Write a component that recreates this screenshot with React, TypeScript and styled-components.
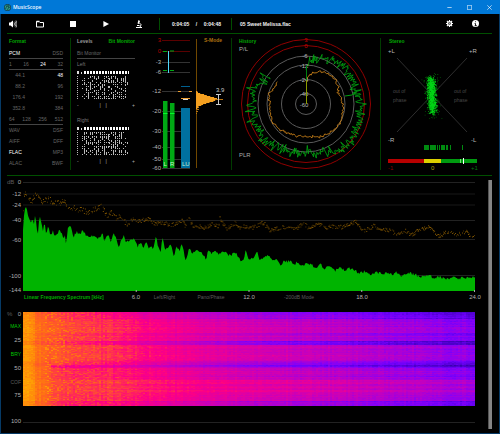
import React from "react";
import styled, { createGlobalStyle, css } from "styled-components";

/* ---------- helpers ---------- */

const makeRandom = (seed: number) => {
  let s = seed;
  return () => {
    s = (s * 1664525 + 1013904223) % 4294967296;
    return s / 4294967296;
  };
};

type Point = [number, number];

const interpolate = (points: Point[], x: number) => {
  for (let i = 1; i < points.length; i++) {
    if (x <= points[i][0]) {
      const [x0, y0] = points[i - 1];
      const [x1, y1] = points[i];
      return y0 + ((x - x0) / (x1 - x0)) * (y1 - y0);
    }
  }
  return points[points.length - 1][1];
};

/* ---------- styles ---------- */

const FONT = '"Liberation Sans", Arial, sans-serif';

const GlobalStyle = createGlobalStyle`
  * { box-sizing: border-box; }
  html, body { margin: 0; background: #000; }
  body { font-family: ${FONT}; font-size: 5px; line-height: 8px; color: #777; }
  button { font: inherit; color: inherit; background: none; border: 0; padding: 0; margin: 0; cursor: pointer; }
  svg { display: block; }
`;

const Window = styled.div`
  display: flex;
  flex-direction: column;
  min-height: 100vh;
  background: #000;
  border: 1px solid #063a66;
  border-top: 0;
`;

const TitleBar = styled.header`
  display: flex;
  align-items: center;
  height: 14px;
  margin: 0 -1px;
  padding: 0 5px 0 4px;
  gap: 2px;
  background: #0078d7;
`;

const AppName = styled.h1`
  flex: 1;
  margin: 0;
  font-family: "Open Sans", sans-serif;
  font-size: 5px;
  line-height: 8px;
  font-weight: 600;
  color: #f0f8ff;
`;

const WindowButtons = styled.div`
  display: flex;
  gap: 8px;
`;

const IconButton = styled.button`
  display: grid;
  place-items: center;
  width: 12px;
  height: 12px;
  color: #fff;
`;

const Toolbar = styled.nav`
  display: flex;
  align-items: center;
  height: 19px;
  margin-left: 6px;
  padding-right: 18px;
  color: #f4f4f4;
  font-weight: 700;
`;

const Transport = styled.div`
  display: grid;
  grid-template-columns: 27px 33px 33px 33px 26px;
`;

const ToolDivider = styled.span`
  width: 1px;
  height: 12px;
  background: #004d00;
`;

const Clock = styled.div`
  display: flex;
  justify-content: space-between;
  width: 71px;
  padding: 0 10px 0 12px;
`;

const TrackName = styled.div`
  flex: 1;
  padding-left: 8px;
`;

const ToolbarEnd = styled.div`
  display: flex;
  gap: 14px;
`;

const Panels = styled.section`
  display: grid;
  grid-template-columns: 64fr 74fr 87fr 149fr 103fr;
  margin: 0 7px 0 6px;
  padding-right: 8px;
  border-top: 1px solid #005000;
  border-bottom: 1px solid #005000;
  min-height: 143px;
`;

const Panel = styled.section<{ $divided?: boolean }>`
  position: relative;
  min-width: 0;
  ${(p) =>
    p.$divided &&
    css`
      background: linear-gradient(#003c00, #003c00) right 4px / 1px 132px no-repeat;
    `}
`;

const FormatPanel = styled(Panel)`
  padding: 0 8px 0 2px;
`;

const LevelsPanel = styled(Panel)`
  padding: 0 10px 0 6px;
`;

const PanelHead = styled.header`
  display: flex;
  justify-content: space-between;
  align-items: center;
  height: 14px;
  font-weight: 700;
  color: #888;
`;

const PanelTitle = styled.h2`
  margin: 0;
  font: inherit;
  color: #00a800;
`;

const TabButton = styled.button<{ $active?: boolean }>`
  color: ${(p) => (p.$active ? "#00a800" : "#999")};
`;

const Row = styled.div<{ $ruled?: boolean; $indent?: boolean }>`
  display: flex;
  justify-content: space-between;
  align-items: center;
  height: 11px;
  color: #666;
  border-bottom: 1px solid ${(p) => (p.$ruled ? "#444" : "transparent")};
  > :first-child {
    min-width: ${(p) => (p.$indent ? "16px" : "0")};
    text-align: ${(p) => (p.$indent ? "right" : "left")};
  }
`;

const Value = styled.span<{ $on?: boolean }>`
  color: ${(p) => (p.$on ? "#fff" : "inherit")};
`;

const ChannelName = styled.div`
  height: 11px;
  line-height: 11px;
  color: #777;
`;

const BitMap = styled.svg`
  width: 90%;
  height: 28px;
  margin-top: 1px;
`;

const BitScale = styled.div<{ $last?: boolean }>`
  display: grid;
  grid-template-columns: 22fr 6fr 26fr 3fr;
  align-items: center;
  height: 11px;
  margin-bottom: ${(p) => (p.$last ? "0" : "5px")};
  color: #aaa;
`;

const Drawing = styled.svg`
  width: 100%;
  height: auto;
  font-family: ${FONT};
  font-size: 6px;
`;

const Analysis = styled.main`
  flex: 1;
  display: flex;
  gap: 13px;
  padding: 0 7px 4px 6px;
`;

const Graphs = styled.div`
  flex: 1;
  min-width: 0;
  padding-top: 2px;
`;

const Graph = styled.section`
  display: flex;
  margin-bottom: 8px;
  &:last-child { margin-bottom: 0; }
`;

const Axis = styled.div`
  width: 16px;
  padding-right: 2px;
  font-size: 6px;
  color: #b0b0b0;
  white-space: nowrap;
`;

const Tick = styled.div<{ $gap: number }>`
  display: flex;
  justify-content: flex-end;
  height: ${(p) => p.$gap}px;
`;

const Unit = styled.span`
  flex: 1;
  color: #5c5c5c;
`;

const ModeButton = styled.button<{ $on?: boolean }>`
  height: 8px;
  font-size: 5px;
  color: ${(p) => (p.$on ? "#00c800" : "#5c5c5c")};
`;

const PlotColumn = styled.div`
  flex: 1;
  min-width: 0;
`;

const Plot = styled.svg<{ $height: number; $top?: number }>`
  width: 100%;
  height: ${(p) => p.$height}px;
  margin-top: ${(p) => p.$top ?? 0}px;
`;

const FrequencyRow = styled.div`
  display: grid;
  grid-template-columns: 103fr 20fr 37fr 56fr 20fr 80fr 13fr 20fr 93fr 20fr;
  height: 10px;
  margin-right: -10px;
  justify-items: center;
  align-items: center;
  white-space: nowrap;
  color: #5c5c5c;
`;

const GraphTitle = styled.h2`
  justify-self: start;
  margin: 0;
  padding-left: 1px;
  font: inherit;
  font-weight: 700;
  color: #00a800;
`;

const Frequency = styled.span`
  font-size: 6px;
  color: #b0b0b0;
`;

const ScrollBar = styled.div`
  width: 4px;
  margin-top: 4px;
  background: #858585;
  border-left: 1px solid #555;
`;

/* ---------- format and levels ---------- */

const rates = [
  ["44.1", "48"],
  ["88.2", "96"],
  ["176.4", "192"],
  ["352.8", "384"],
];
const files = [
  ["WAV", "DSF"],
  ["AIFF", "DFF"],
  ["FLAC", "MP3"],
  ["ALAC", "BWF"],
];
const active = new Set(["PCM", "24", "48", "FLAC"]);

const Values = ({ items, ruled, indent }: { items: string[]; ruled?: boolean; indent?: boolean }) => (
  <Row $ruled={ruled} $indent={indent}>
    {items.map((item) => (
      <Value key={item} $on={active.has(item)}>
        {item}
      </Value>
    ))}
  </Row>
);

const bitPath = (seed: number) => {
  const rnd = makeRandom(seed);
  let d = "";
  for (let y = 5; y < 28; y += 2) {
    d += `M0 ${y}h1v1h-1z`;
    if (rnd() > 0.6) d += `M5 ${y}h1v1h-1z`;
    for (let x = 7; x < 52; x += 2) {
      const density = x === 21 || x === 27 || x === 39 ? 0.9 : 0.55;
      if (rnd() < density) d += `M${x} ${y}h1v${rnd() > 0.5 ? 2 : 1}h-1z`;
    }
  }
  return d;
};

const Bits = ({ seed }: { seed: number }) => (
  <BitMap viewBox="0 0 53 28" preserveAspectRatio="none" shapeRendering="crispEdges">
    <path d="M0 0h2v3h-2zM4 1h1v2h-1z" fill="#ddd" />
    <path d="M7 1.5H53" stroke="#fff" strokeWidth="3" strokeDasharray="2 1" />
    <path d={bitPath(seed)} fill="#bbb" />
  </BitMap>
);

/* ---------- loudness meter ---------- */

const meterTicks: [string, number][] = [
  ["3", 6], ["0", 17], ["-3", 28], ["-6", 38], ["-12", 57],
  ["-20", 77], ["-30", 97], ["-40", 113], ["-50", 125], ["-60", 134],
];

const Meter = () => {
  const rnd = makeRandom(8);
  let lobe = "M51 57";
  for (let y = 57; y <= 74; y++) {
    const w = 20 * Math.exp(-Math.pow((y - 65) / 4.6, 2)) + rnd() * 2;
    lobe += `H${(51 + w).toFixed(1)}v1`;
  }
  lobe += "H51z";
  return (
    <Drawing viewBox="0 0 87 140" role="img" aria-label="Level and loudness meter">
      {meterTicks.map(([label, y]) => (
        <g key={label}>
          <line x1="17" x2="45" y1={y + 0.5} y2={y + 0.5} stroke={y < 20 ? "#5a0000" : "#333"} />
          <text x="16" y={y + 2} textAnchor="end" fill={y < 20 ? "#b80000" : "#b8b8b8"}>
            {label}
          </text>
        </g>
      ))}
      <rect x="18" y="67" width="4.500" height="67" fill="#00a814" />
      <rect x="25" y="69" width="4.500" height="65" fill="#00a814" />
      <rect x="18" y="79" width="4.500" height="1" fill="#00ff2a" />
      <rect x="25" y="79" width="4.500" height="1" fill="#00ff2a" />
      <rect x="36" y="74" width="9" height="60" fill="#0070a0" />
      <rect x="36" y="52" width="9" height="1" fill="#006090" />
      <path d="M33 57.500h3M44 57.500h3M36 64.500h9" stroke="#f0a030" />
      <path d="M38 65.500h5" stroke="#ddd" />
      <path d="M18 17.500h4M25 17h4M18 36.500h4M25 36.500h4" stroke="#00a814" />
      <path d="M23.500 17V39" stroke="#50d8f8" />
      <path d="M51.500 5V134" stroke="#704800" />
      <path d={lobe} fill="#f5a020" />
      <path d="M51 75.500h3M51 77.500h2M51 79.500h1M70 65.500h8" stroke="#b87410" />
      <path d="M73.500 60V71M71 60.500h5M71 70.500h5" stroke="#ccc" fill="none" />
      <text x="71" y="58" fill="#ccc">3.9</text>
      <text x="59" y="8" fill="#b07010" fontWeight="700" fontSize="5">S-Mode</text>
      <g fill="#c8f0d0" fontSize="6">
        <text x="18.500" y="132">L</text>
        <text x="25" y="132">R</text>
        <text x="37" y="132">LU</text>
      </g>
    </Drawing>
  );
};

/* ---------- history ---------- */

const peakRadius: Point[] = [
  [0, 39], [8, 43], [20, 49], [32, 50], [45, 53], [60, 54], [75, 51], [90, 54], [110, 57],
  [135, 58], [150, 54], [165, 50], [180, 48], [200, 50], [225, 54], [250, 56], [270, 54], [285, 56], [297, 49], [306, 50],
];
const loudRadius: Point[] = [
  [2, 26], [8, 30], [25, 36], [45, 38], [58, 37], [70, 34], [90, 37], [120, 39], [150, 37],
  [170, 33], [190, 33], [210, 34], [240, 38], [270, 36], [285, 38], [305, 35], [308, 37],
];

const polarPath = (radius: Point[], step: number, jitter: number, seed: number) => {
  const rnd = makeRandom(seed);
  const last = radius[radius.length - 1][0];
  const parts: string[] = [];
  for (let a = radius[0][0]; a <= last; a += step) {
    const r = interpolate(radius, a) + (rnd() + rnd() - 1) * jitter;
    const t = (a * Math.PI) / 180;
    parts.push(`${(74 + r * Math.sin(t)).toFixed(1)} ${(70 - r * Math.cos(t)).toFixed(1)}`);
  }
  return "M" + parts.join("L");
};

const History = () => (
  <Drawing viewBox="0 0 149 140" role="img" aria-label="History">
    <g fill="none">
      <g stroke="#900000">
        <circle cx="74" cy="70" r="64.500" />
        <circle cx="74" cy="70" r="58.500" />
      </g>
      <g stroke="#5a5a5a">
        <circle cx="74" cy="70" r="48" />
        <circle cx="74" cy="70" r="39" />
        <circle cx="74" cy="70" r="24.500" />
        <circle cx="74" cy="70" r="10.500" />
      </g>
      <path d={polarPath(peakRadius, 0.9, 7, 31)} stroke="#00a810" strokeWidth="0.800" />
      <path d="M113 62l7-1" stroke="#00a010" />
      <path d={polarPath(loudRadius, 2, 1.8, 9)} stroke="#c88018" strokeWidth="0.900" />
    </g>
    <g fill="#b8b8b8" textAnchor="middle">
      <text x="74" y="8" fill="#c00000">3</text>
      <text x="74" y="14" fill="#c00000">0</text>
      <text x="73" y="24">-6</text>
      <text x="72" y="34">-12</text>
      <text x="72" y="48">-24</text>
      <text x="72" y="62">-40</text>
      <text x="72" y="73">-60</text>
    </g>
    <path d="M74.500 32V46" stroke="#008010" />
    <path d="M74.500 46V70" stroke="#8a9a00" />
    <text x="7" y="9" fill="#00a800" fontWeight="700" fontSize="5">History</text>
    <text x="7" y="17" fill="#aaa">P/L</text>
    <text x="7" y="123" fill="#aaa">PLR</text>
  </Drawing>
);

/* ---------- stereo ---------- */

const cloudPath = (seed: number, count: number, spread: number, reach: number, tail: number) => {
  const rnd = makeRandom(seed);
  let d = "";
  for (let i = 0; i < count; i++) {
    const y = (rnd() - 0.5) * 2 * reach + (rnd() - 0.5) * tail;
    const x = (rnd() + rnd() + rnd() - 1.5) * spread + y * 0.05;
    d += `M${(50.5 + x).toFixed(1)} ${(61 + y).toFixed(1)}h.8v.8h-.8z`;
  }
  return d;
};

const barcode = () => {
  const rnd = makeRandom(77);
  let d = "";
  for (let x = 36; x < 82; x++) {
    const dense = x > 42 && x < 68;
    if (rnd() < (dense ? 0.75 : 0.15)) d += `M${x}.5 111v5`;
  }
  return d;
};

const Stereo = () => (
  <Drawing viewBox="0 0 103 140" role="img" aria-label="Stereo">
    <path d="M16 24L86 98M86 24L16 98" stroke="#3a3a3a" strokeWidth="0.800" />
    <text x="8" y="9" fill="#00a800" fontWeight="700" fontSize="5">Stereo</text>
    <g fill="#b8b8b8">
      <text x="7" y="19">+L</text>
      <text x="88" y="19">+R</text>
      <text x="7" y="108">-R</text>
      <text x="90" y="108">-L</text>
    </g>
    <g fill="#484848" fontSize="5">
      <text x="12" y="59">out of</text>
      <text x="12" y="68">phase</text>
      <text x="73" y="59">out of</text>
      <text x="73" y="68">phase</text>
    </g>
    <path d={cloudPath(5, 380, 7, 18, 12)} fill="#006a08" />
    <path d={cloudPath(12, 900, 3.8, 16, 8)} fill="#00d414" />
    <path d={barcode()} stroke="#009a12" strokeWidth="0.900" />
    <rect x="7" y="125" width="36" height="4" fill="#b80000" />
    <rect x="43" y="125" width="17" height="4" fill="#dcd000" />
    <rect x="60" y="125" width="36" height="4" fill="#009a10" />
    <path d="M79.500 125v4" stroke="#70e870" />
    <path d="M82.500 124v6" stroke="#fff" />
    <text x="7" y="136" fill="#900000">-1</text>
    <text x="50" y="136" fill="#b0a800">0</text>
    <text x="90" y="136" fill="#007a10">+1</text>
  </Drawing>
);

/* ---------- spectrum ---------- */

const dbTicks: [string, number][] = [
  ["0", 12], ["-12", 11], ["-24", 15], ["-40", 20], ["-60", 36], ["-100", 14], ["-144", 8],
];

/* Points are in thirds of a pixel, measured from the left end of the axis. */
const level: Point[] = [
  [68, 170], [72, 110], [76, 92], [84, 125], [92, 150], [96, 130], [100, 155], [105, 118], [112, 185], [118, 125],
  [128, 170], [133, 145], [138, 185], [144, 152], [150, 180], [158, 172], [163, 188], [172, 182], [178, 165], [190, 195],
  [193, 178], [197, 208], [203, 165], [209, 155], [214, 165], [220, 190], [230, 172], [238, 183], [245, 170], [255, 180],
  [265, 190], [280, 185], [292, 195], [307, 178], [312, 200], [325, 182], [332, 200], [342, 180], [356, 215], [372, 183],
  [378, 205], [392, 195], [405, 198], [413, 218], [420, 205], [430, 222], [438, 200], [445, 225], [460, 220], [467, 185],
  [474, 215], [482, 230], [488, 190], [495, 230], [513, 212], [522, 248], [530, 215], [538, 230], [546, 212], [558, 260],
  [568, 218], [575, 240], [585, 228], [605, 232], [618, 258], [625, 225], [635, 238], [645, 230], [655, 240], [672, 232],
  [690, 245], [708, 235], [722, 260], [733, 255], [738, 225], [745, 255], [762, 250], [772, 228], [778, 262], [795, 250],
  [807, 245], [818, 262], [830, 252], [842, 270], [855, 262], [872, 262], [885, 272], [892, 262], [905, 278], [920, 268],
  [935, 272], [950, 282], [962, 270], [975, 285], [988, 275], [1005, 290], [1020, 283], [1035, 288], [1050, 282],
  [1080, 298], [1095, 292], [1110, 302], [1130, 296], [1180, 300], [1190, 295], [1205, 305], [1230, 297], [1265, 308],
  [1285, 305], [1305, 312], [1320, 308], [1340, 315], [1362, 308], [1380, 315], [1395, 308], [1410, 315], [1427, 308],
];
const peaks: Point[] = [
  [68, 100], [72, 55], [80, 60], [92, 82], [105, 62], [125, 82], [145, 75], [165, 88], [190, 80], [205, 98], [225, 102],
  [260, 112], [285, 105], [303, 95], [318, 122], [335, 115], [345, 132], [360, 128], [378, 148], [400, 135], [420, 140],
  [440, 132], [465, 148], [490, 145], [510, 152], [540, 145], [545, 130], [555, 155], [563, 128], [580, 155], [615, 160],
  [635, 148], [655, 158], [658, 130], [680, 165], [705, 145], [720, 162], [735, 155], [750, 162], [790, 145], [810, 168],
  [840, 160], [870, 155], [885, 165], [910, 145], [925, 160], [960, 150], [980, 160], [1000, 155], [1025, 158],
  [1068, 142], [1090, 172], [1120, 155], [1150, 165], [1170, 168], [1195, 182], [1215, 168], [1235, 182], [1255, 168],
  [1290, 158], [1315, 185], [1340, 175], [1375, 180], [1400, 170], [1415, 190], [1427, 178],
];

const spectrumPath = () => {
  const rnd = makeRandom(3);
  let d = "M0 113";
  for (let x = 0; x < 453; x++) {
    const y = interpolate(level, 68 + x * 3) / 3 - 4 + (rnd() - 0.5) * 3;
    d += `L${x} ${y.toFixed(1)}`;
  }
  return d + "L453 99V113z";
};

const peakPath = (seed: number) => {
  const rnd = makeRandom(seed);
  let d = "";
  for (let x = 0; x < 453; x++) {
    if (rnd() < 0.25) continue;
    const spread = x < 110 ? 6 : 4;
    const y = interpolate(peaks, 68 + x * 3) / 3 - 4 + (rnd() - 0.5) * spread;
    d += `M${x} ${y.toFixed(1)}h1v1h-1z`;
  }
  return d;
};

const Spectrum = () => (
  <Plot $height={114} viewBox="0 0 453 114" preserveAspectRatio="none" role="img" aria-label="Frequency spectrum">
    <path d="M0 4.500H453M0 42.500H453M0 61.500H453M0 97.500H453" stroke="#222" />
    <path d="M0 16H453M0 27H453" stroke="#181818" />
    <path d={peakPath(17)} fill="#805500" />
    <path d={peakPath(41)} fill="#4c3300" />
    <path d={spectrumPath()} fill="#00b400" />
    <path d="M113.500 112v2M226.500 112v2M339.500 112v2M452.500 112v2" stroke="#aaa" />
  </Plot>
);

/* ---------- spectrogram ---------- */

const heatStops: [number, number, number, number][] = [
  [0, 24, 0, 90], [0.15, 60, 0, 180], [0.3, 110, 0, 250], [0.36, 135, 0, 245], [0.46, 180, 0, 205],
  [0.58, 222, 0, 165], [0.68, 255, 0, 130], [0.78, 255, 62, 66], [0.88, 255, 110, 20], [1, 255, 172, 0],
];

const heatColor = (v: number) => {
  let i = 1;
  while (i < heatStops.length - 1 && v > heatStops[i][0]) i++;
  const a = heatStops[i - 1];
  const b = heatStops[i];
  const t = (v - a[0]) / (b[0] - a[0]);
  return `rgb(${[1, 2, 3].map((k) => Math.round(a[k] + (b[k] - a[k]) * t)).join(",")})`;
};

const energy: Point[] = [
  [0, 0.97], [8, 0.95], [14, 0.88], [40, 0.8], [90, 0.74], [120, 0.68], [160, 0.62], [230, 0.54],
  [300, 0.49], [380, 0.42], [453, 0.36],
];

/* Each band is [first row below it, level offset]. */
const bands: [number, number][] = [
  [7, -0.12], [21, 0], [24, -0.07], [27, 0], [29, -0.04], [33, -0.16], [49, 0.02], [55, -0.09], [62, 0],
  [68, -0.02], [81, 0.07], [89, 0.02], [94, -0.08],
];

const spectrogramPaths = () => {
  const levels = 36;
  const paths: string[] = Array(levels + 1).fill("");
  const rnd = makeRandom(99);
  const columns = Array.from({ length: 227 }, () => (rnd() - 0.5) * 0.04);
  for (let y = 0; y < 94; y++) {
    const band = bands.find(([end]) => y < end)![1] + (rnd() - 0.5) * 0.08;
    let start = 0;
    let current = -1;
    for (let c = 0; c < 227; c++) {
      const x = c * 2;
      const far = Math.min(1, 0.2 + x / 300);
      let v = interpolate(energy, x) + band * far + columns[c] + (rnd() - 0.5) * 0.04;
      if (y > 53 && x > 26 && x < 120) v -= 0.06 * (1 - (x - 26) / 94);
      if (y > 52 && y < 56 && x > 26) v -= 0.08;
      if (x > 20 && x < 150 && rnd() < 0.22) v += 0.1 * (1 - x / 160);
      const q = Math.round(Math.max(0, Math.min(1, v)) * levels);
      if (q !== current) {
        if (current >= 0) paths[current] += `M${start} ${y}H${x}v1H${start}z`;
        start = x;
        current = q;
      }
    }
    paths[current] += `M${start} ${y}H453v1H${start}z`;
  }
  return paths.map((d, i) => ({ d, fill: heatColor(i / levels) }));
};

const Spectrogram = () => (
  <Plot
    $height={111}
    $top={2}
    viewBox="0 0 453 111"
    preserveAspectRatio="none"
    shapeRendering="crispEdges"
    role="img"
    aria-label="Spectrogram"
  >
    {spectrogramPaths().map(({ d, fill }) => (d ? <path key={fill} d={d} fill={fill} /> : null))}
    <path d="M0 110.500H453" stroke="#222" />
  </Plot>
);

/* ---------- icons ---------- */

const Icon = ({ size, children }: { size: number; children: React.ReactNode }) => (
  <svg width={size} height={size} viewBox="0 0 16 16" fill="none" stroke="currentColor" strokeWidth="2" aria-hidden="true">
    {children}
  </svg>
);

const AppLogo = () => (
  <svg width="7" height="7" viewBox="0 0 14 14" aria-hidden="true">
    <circle cx="7" cy="7" r="7" fill="#123f4d" />
    <circle cx="7" cy="7" r="5.500" fill="#2fa08a" />
    <path d="M3 10L6 3l3 4-2 5M8 2l3 6" stroke="#0b3440" strokeWidth="1.500" fill="none" />
  </svg>
);

/* ---------- page ---------- */

export default function App() {
  return (
    <>
      <GlobalStyle />
      <Window>
        <TitleBar>
          <AppLogo />
          <AppName>MusicScope</AppName>
          <WindowButtons>
            <IconButton aria-label="Minimize">
              <Icon size={5}><path d="M1 8H15" /></Icon>
            </IconButton>
            <IconButton aria-label="Maximize">
              <Icon size={5}><path d="M1 1H15V15H1z" /></Icon>
            </IconButton>
            <IconButton aria-label="Close">
              <Icon size={5}><path d="M1 1L15 15M15 1L1 15" /></Icon>
            </IconButton>
          </WindowButtons>
        </TitleBar>

        <Toolbar>
          <Transport>
            <IconButton aria-label="Volume">
              <Icon size={8}>
                <path d="M0 5H3L8 1V15L3 11H0z" fill="currentColor" stroke="none" />
                <path d="M10 5q2 3 0 6M12 3q4 5 0 10M14 1q5 7 0 14" strokeWidth="1.300" />
              </Icon>
            </IconButton>
            <IconButton aria-label="Open folder">
              <Icon size={8}><path d="M1 14V3H6L8 5H15V14z" /><path d="M1 3H7" strokeWidth="3" /></Icon>
            </IconButton>
            <IconButton aria-label="Stop">
              <Icon size={6}><path d="M0 0H16V16H0z" fill="currentColor" stroke="none" /></Icon>
            </IconButton>
            <IconButton aria-label="Play">
              <Icon size={6}><path d="M1 0L16 8L1 16z" fill="currentColor" stroke="none" /></Icon>
            </IconButton>
            <IconButton aria-label="Analyze">
              <Icon size={8}>
                <path d="M2 15H14M4 11H9" />
                <path d="M9 6q6 3 1 8" />
                <path d="M7 0L10 2L8 8L5 7z" fill="currentColor" stroke="none" />
              </Icon>
            </IconButton>
          </Transport>
          <ToolDivider />
          <Clock>
            <span>0:04:05</span>
            <span>/</span>
            <span>0:04:48</span>
          </Clock>
          <ToolDivider />
          <TrackName>05 Sweet Melissa.flac</TrackName>
          <ToolbarEnd>
            <IconButton aria-label="Settings">
              <Icon size={7}>
                <circle cx="8" cy="8" r="4.500" strokeWidth="3" />
                <path d="M8 0V4M8 12V16M0 8H4M12 8H16M2 2L5 5M11 11L14 14M14 2L11 5M5 11L2 14" strokeWidth="2.500" />
                <circle cx="8" cy="8" r="1" />
              </Icon>
            </IconButton>
            <IconButton aria-label="Information">
              <Icon size={7}>
                <circle cx="8" cy="8" r="8" fill="currentColor" stroke="none" />
                <path d="M8 3V5M6 8H8V13M6 13H11" stroke="#000" />
              </Icon>
            </IconButton>
          </ToolbarEnd>
        </Toolbar>

        <Panels>
          <FormatPanel $divided>
            <PanelHead>
              <PanelTitle>Format</PanelTitle>
            </PanelHead>
            <Values items={["PCM", "DSD"]} ruled />
            <Values items={["1", "16", "24", "32"]} ruled />
            {rates.map((r) => (
              <Values key={r[0]} items={r} indent />
            ))}
            <Values items={["64", "128", "256", "512"]} ruled />
            {files.map((f) => (
              <Values key={f[0]} items={f} />
            ))}
          </FormatPanel>

          <LevelsPanel>
            <PanelHead>
              <TabButton>Levels</TabButton>
              <TabButton $active>Bit Monitor</TabButton>
            </PanelHead>
            <Row $ruled>
              <span>Bit Monitor</span>
            </Row>
            <ChannelName>Left</ChannelName>
            <Bits seed={4} />
            <BitScale>
              <span>-</span>
              <span>|</span>
              <span>|</span>
              <span>+</span>
            </BitScale>
            <ChannelName>Right</ChannelName>
            <Bits seed={23} />
            <BitScale $last>
              <span>-</span>
              <span>|</span>
              <span>|</span>
              <span>+</span>
            </BitScale>
          </LevelsPanel>

          <Panel $divided>
            <Meter />
          </Panel>
          <Panel $divided>
            <History />
          </Panel>
          <Panel>
            <Stereo />
          </Panel>
        </Panels>

        <Analysis>
          <Graphs>
            <Graph>
              <Axis>
                {dbTicks.map(([label, gap], i) => (
                  <Tick key={label} $gap={gap}>
                    {i === 0 && <Unit>dB</Unit>}
                    <span>{label}</span>
                  </Tick>
                ))}
              </Axis>
              <PlotColumn>
                <Spectrum />
                <FrequencyRow>
                  <GraphTitle>Linear Frequency Spectrum [kHz]</GraphTitle>
                  <Frequency>6.0</Frequency>
                  <button>Left/Right</button>
                  <button>Pano/Phase</button>
                  <Frequency>12.0</Frequency>
                  <button>-200dB Mode</button>
                  <span />
                  <Frequency>18.0</Frequency>
                  <span />
                  <Frequency>24.0</Frequency>
                </FrequencyRow>
              </PlotColumn>
            </Graph>

            <Graph>
              <Axis>
                <Tick $gap={12}>
                  <Unit>%</Unit>
                  <span>0</span>
                </Tick>
                <Tick $gap={14}><ModeButton $on>MAX</ModeButton></Tick>
                <Tick $gap={14}>25</Tick>
                <Tick $gap={14}><ModeButton $on>BRY</ModeButton></Tick>
                <Tick $gap={14}>50</Tick>
                <Tick $gap={13}><ModeButton>COF</ModeButton></Tick>
                <Tick $gap={26}>75</Tick>
                <Tick $gap={8}>100</Tick>
              </Axis>
              <PlotColumn>
                <Spectrogram />
              </PlotColumn>
            </Graph>
          </Graphs>
          <ScrollBar />
        </Analysis>
      </Window>
    </>
  );
}
